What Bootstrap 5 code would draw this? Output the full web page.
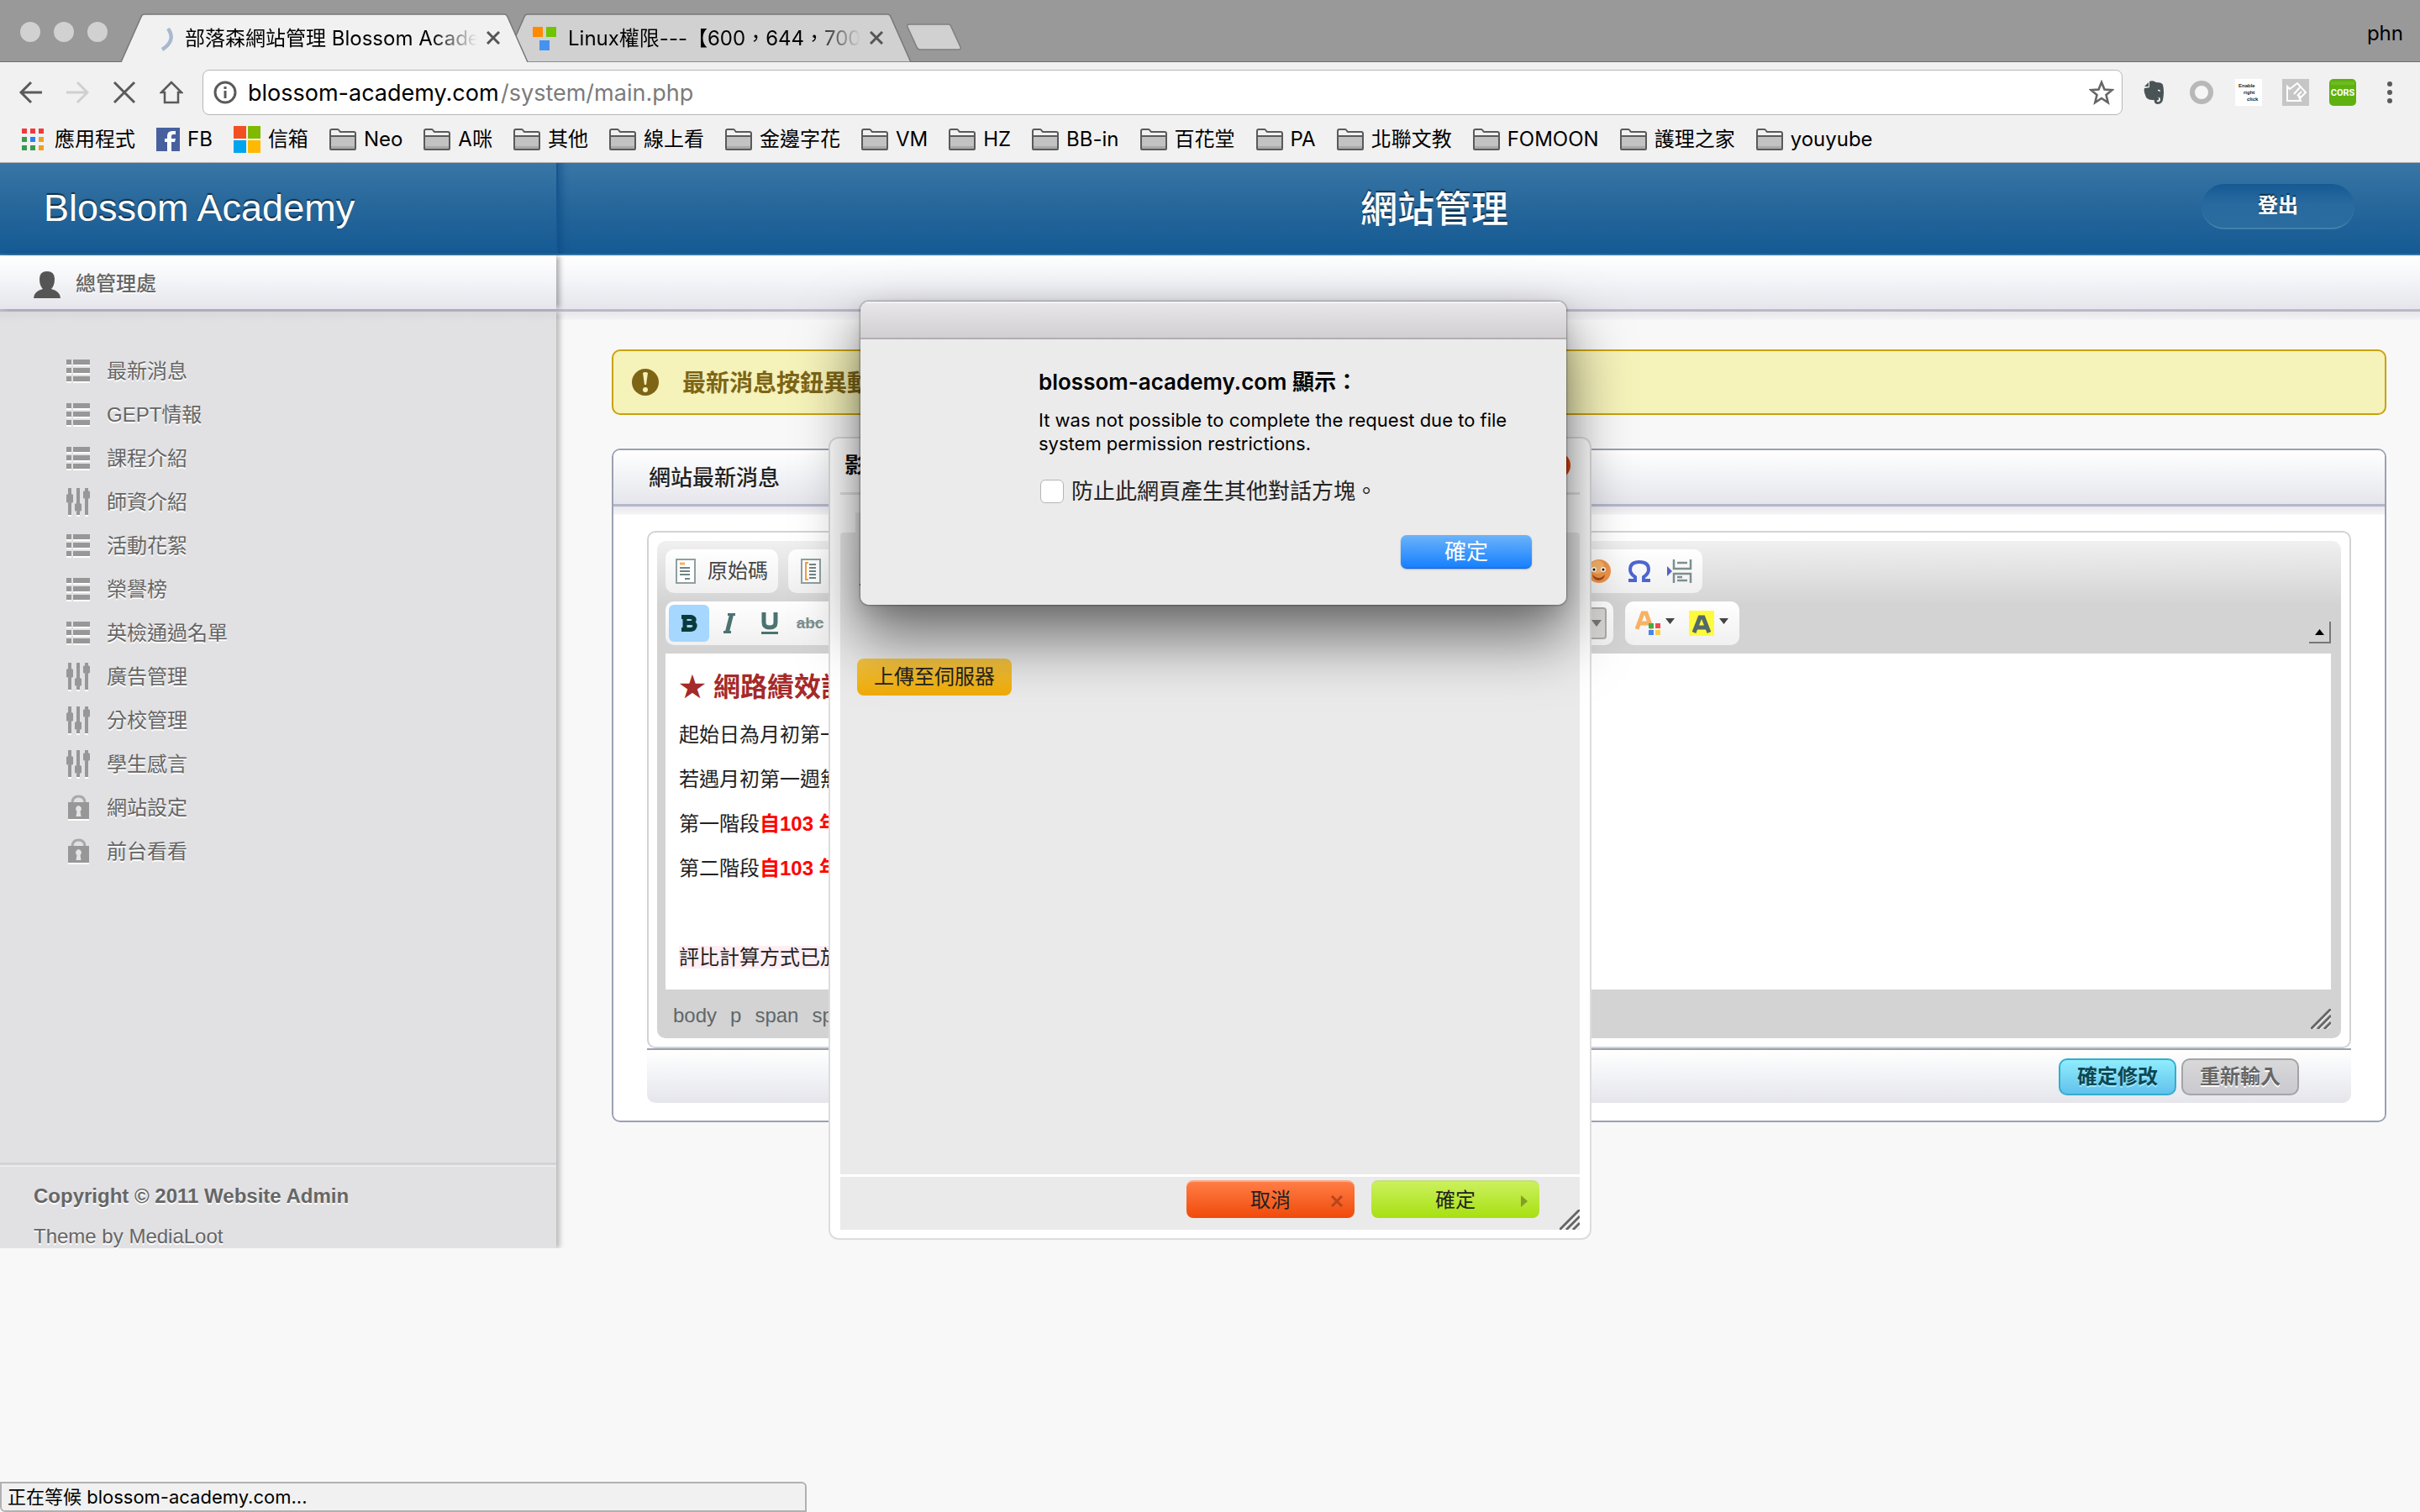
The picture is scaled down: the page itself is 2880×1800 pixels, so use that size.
<!DOCTYPE html>
<html lang="zh-Hant">
<head>
<meta charset="utf-8">
<meta name="viewport" content="width=device-width, initial-scale=1">
<title>部落森網站管理 Blossom Academy</title>
<link href="https://cdn.jsdelivr.net/npm/bootstrap@5.3.0/dist/css/bootstrap.min.css" rel="stylesheet">
<style>
:root{--ui:Inter,"Noto Sans CJK TC",sans-serif;--web:"Liberation Sans","Noto Sans CJK TC",sans-serif}
body{font:24px/32px var(--web);color:#222;background:#f8f8f8;overflow:hidden}
svg{display:block;flex:none}
a{color:inherit;text-decoration:none}
button{font-family:inherit}
.plain-btn{border:0;background:none;padding:0}
/* browser chrome */
.chrome{font-family:var(--ui);color:#000;background:#f1f1f1;border-bottom:1px solid #b4b4b4}
.strip{height:74px;background:#999;border-bottom:1px solid #6f6f6f;padding:16px 20px 0 24px}
.lights{gap:16px;height:44px;width:120px}
.lights i{width:24px;height:24px;border-radius:50%;background:#d1d1d1}
.tabx{width:484px;height:58px;padding:0 33px 0 76px;position:relative}
.tabx+.tabx{margin-left:-28px}
.tabx.front{z-index:2}
.tabx .shape{position:absolute;inset:0;width:100%;height:58px}
.tabx .fav{position:absolute;left:32px;top:14px}
.tabx .ttl{position:relative;overflow:hidden;white-space:nowrap;width:348px;line-height:58px;padding-top:2px;-webkit-mask-image:linear-gradient(90deg,#000 84%,transparent)}
.tabx button{position:relative;margin-left:auto}
.newtab{margin-left:-5px}
.tools{height:72px;padding:0 20px 0 22px}
.nav-ic{gap:28px;width:219px}
.omni{height:54px;background:#fff;border:1px solid #b6b6b6;border-radius:8px;padding:0 9px 0 12px;font-size:28px}
.omni input{border:0;padding:0;background:none;width:306px;color:#000;outline:0;line-height:40px;margin:2px -7px 0 13px}
.omni input,.omni span{font-size:27px}
.omni span{color:#7b7b7b;padding-top:2px;margin-left:2px}
.exts{gap:24px;padding-left:22px}
.marks{height:47px;padding:0 25px 8px;white-space:nowrap}
.marks a{display:flex;align-items:center;gap:9px;margin-right:25px}
/* site header */
.site-top{height:110px;background:linear-gradient(#3976a6,#29699c 40%,#155a94);border-bottom:2px solid #3775a5;color:#fff;text-shadow:0 -2px 1px rgba(0,0,0,.55)}
.side-w{width:662px;flex:none}
.brand{font-size:45px;line-height:54px;padding-left:52px;margin:0;font-weight:400}
.site-top .rest{border-left:2px solid #155790;box-shadow:inset 14px 0 10px -10px rgba(10,70,130,.6);padding-right:78px;position:relative}
.site-top h2{font-size:44px;line-height:54px;margin:0;font-weight:500;flex:1;text-align:center;padding:3px 0 0 130px}
.logout{width:182px;height:54px;border:0;border-radius:27px;border-bottom:2px solid #4480ae;background:linear-gradient(#165a94,#286a9f 45%,#2b6c9f);color:#fff;font-weight:700;font-size:24px;text-shadow:0 -2px 1px rgba(0,0,0,.5);margin-bottom:5px}
.userbar{height:67px;background:linear-gradient(#fff,#f4f5f8 45%,#e5e5eb);border-bottom:3px solid #b8bacb;color:#666;font-weight:500}
.userbar .side-w{padding:3px 0 0 38px;gap:16px;box-shadow:5px 0 6px -1px rgba(0,0,0,.3);text-shadow:0 2px 0 #fff}
/* sidebar */
.sidebar{min-height:1115px;background:linear-gradient(#d9d9dc,#e1e1e3 12px);box-shadow:4px 0 6px rgba(0,0,0,.25);color:#666;text-shadow:0 2px 0 #fff;position:relative;z-index:1;clip-path:inset(0 -20px 0 0)}
.sidebar ul{padding:45px 0 0 78px}
.sidebar li a{display:flex;align-items:center;gap:17px;height:52px}
.foot{border-top:3px solid #d3d3d3;box-shadow:inset 0 2px 0 #ebebed;padding:21px 40px 0;height:102px}
.foot p{margin:0 0 16px}
/* main */
main{padding:45px 40px 0 66px;min-width:0;background:linear-gradient(#e8e8ec,#f2f2f4 9px,#f8f8f8 10px)}
.note{height:78px;border:2px solid #c9a20c;border-radius:10px;background:#f5f2ba;color:#7d6515;font-size:28px;font-weight:700;padding:0 22px;gap:28px}
.note span{padding-top:3px}
.panel{margin-top:40px;border:2px solid #9ba1b2;border-radius:10px;background:#fff;overflow:hidden;min-height:802px}
.panel-h{height:67px;padding-left:42px;font-size:26px;font-weight:500;line-height:67px;background:linear-gradient(#fff,#f3f4f7 45%,#e5e5eb);border-bottom:3px solid #b4b7c8;text-shadow:0 2px 0 #fff;margin:0;color:#222}
.panel-b{padding:29px 40px 20px;background:linear-gradient(#e8e8ee,#f4f4f7 9px,#fff 10px)}
.ed{border:2px solid #d3d3d3;border-radius:10px;padding:10px;background:#fff}
.ed-in{border-radius:10px;background:linear-gradient(#f0f0f0,#d3d3d3 76px);padding:10px 12px 0 10px}
.grp{height:52px;border-radius:10px;background:linear-gradient(#fff,#f0f0f0)}
.grp button{height:44px;display:flex;align-items:center;justify-content:center;color:#454545}
.doc{height:400px;background:#fff;padding:20px 16px;margin-top:10px;overflow:hidden;white-space:nowrap}
.doc h3{font-size:32px;line-height:40px;font-weight:700;color:#a52a2a;margin:0 0 21px}
.doc p{margin:0 0 21px}
.doc b{color:#f00}
.path{height:58px;padding:4px 0 0 9px;gap:16px;color:#60676a}
.act{height:65px;border-top:2px solid #9ba1b2;border-radius:0 0 10px 10px;background:linear-gradient(#fff,#f3f4f7 45%,#e5e5eb);padding:10px 62px 0 0;gap:6px}
.act button{width:140px;height:44px;border-radius:10px;font-weight:700;font-size:24px;padding:0;line-height:40px}
.go{border:2px solid #31aecd;background:linear-gradient(#8fedfd,#62c1ec);color:#0c4854;text-shadow:0 2px 0 #9eeaff}
.reset{border:2px solid #a4a4a6;background:linear-gradient(#d9d9da,#c9c9cf);color:#666;text-shadow:0 2px 0 #fff}
/* upload dialog over the page */
.dlg{position:absolute;top:520px;left:50%;margin-left:-454px;width:908px;border:2px solid #ddd;border-radius:12px;background:#fff;padding:0 12px 10px;z-index:5}
.dlg-h{height:67px;border-bottom:3px solid #e4e4e4;font-size:26px;font-weight:700;color:#111;padding:0 11px 0 5px;margin-bottom:45px}
.dlg-b{height:767px;background:#eaeaea;border-radius:4px 4px 0 0;border-bottom:3px solid #fff;padding:38px 20px 0;color:#111;position:relative}
.dlg-b:before{content:"";position:absolute;left:18px;top:-24px;width:400px;height:60px;background:linear-gradient(#efefef,#eaeaea)}
.dlg-b label{position:relative;display:block;margin:0 0 80px 2px}
.dlg-b button{display:block;width:184px;height:44px;border:0;border-radius:8px;background:linear-gradient(#f5c545,#f0ac05);color:#222;padding:0}
.dlg-f{height:63px;background:#eaeaea;gap:20px;padding:4px 48px 0 0;position:relative}
.dlg-f button{width:200px;height:45px;border:0;border-radius:8px;color:#222;position:relative;padding:0}
.dlg-f button svg{position:absolute;right:14px;top:16px}
.dlg-f .yes svg{right:9px}
.no{background:linear-gradient(#ff7d45,#f04a0a);border-top:2px solid #f6ad90!important}
.yes{background:linear-gradient(#cbf05c,#a7e011);border-top:2px solid #c2e27d!important}
.grip{position:absolute;right:0;bottom:0}
/* javascript alert over everything */
.js-shadow,.jsbox{position:absolute;top:359px;left:50%;margin-left:-416px;width:840px;height:361px;border-radius:10px}
.jsbox{z-index:7;background:#ebebeb;font-family:var(--ui);color:#000;overflow:hidden}
.js-shadow{z-index:6;box-shadow:0 0 2px 1px rgba(0,0,0,.32),0 38px 70px 4px rgba(0,0,0,.5),0 8px 24px rgba(0,0,0,.12)}
.js-h{height:45px;border-top:2px solid #f4f2f4;border-bottom:2px solid #b1afb1;background:linear-gradient(#e8e6e9,#d1cfd2)}
.js-b{padding:33px 41px 0 212px}
.js-b h4{font-size:26px;line-height:36px;margin:0 0 13px;font-weight:600}
.js-b p{font-size:22px;line-height:28px;margin:0 0 26px}
.js-b .ck{display:flex;align-items:center;gap:9px;font-size:26px;line-height:34px;padding-left:2px;color:#222}
.js-b .ck input{width:28px;height:28px;margin:0;border:1px solid #b5b5b5;border-radius:6px;background:#fff}
.js-b button{display:block;margin:35px 0 0 auto;width:156px;height:40px;border:0;border-radius:7px;background:linear-gradient(#6cb3fa,#1580fe);border-bottom:1px solid #0c62e8;color:#fff;font-size:26px;line-height:39px;padding:0;box-shadow:0 1px 2px rgba(0,0,0,.25)}
.status{position:absolute;left:0;bottom:0;width:960px;height:36px;border:2px solid #b1b1b1;border-radius:0 6px 0 6px;background:#f1f1f1;font:22px/32px var(--ui);padding-left:7px;color:#000}
</style>
</head>
<body class="min-vh-100 position-relative">
<svg width="0" height="0" class="position-absolute">
<symbol id="folder" viewBox="0 0 32 26"><path d="M1 24V3q0-2 2-2h7q1 0 2 2l1 1h16q2 0 2 2v18q0 1-1 1H2q-1 0-1-1z" fill="#f1f1f1" stroke="#5a5a5a" stroke-width="2"/><path d="M2 9h28v15H2z" fill="#c2c2c2"/><path d="M2 21h28v3H2z" fill="#a9a9a9"/><path d="M1 9h30" stroke="#5a5a5a" stroke-width="2"/></symbol>
<symbol id="list" viewBox="0 0 32 32"><path d="M1 5h6v5H1zM9 5h20v5H9zM1 15h6v5H1zM9 15h20v5H9zM1 25h6v5H1zM9 25h20v5H9z" fill="#fff"/><path d="M1 2h6v6H1zM9 2h20v6H9zM1 12h6v6H1zM9 12h20v6H9zM1 22h6v6H1zM9 22h20v6H9z" fill="#979797"/></symbol>
<symbol id="sliders" viewBox="0 0 32 36"><path d="M3 3h4v32H3zM13 3h4v32h-4zM23 3h4v32h-4z" fill="#fff"/><path d="M3 1h4v32H3zM13 1h4v32h-4zM23 1h4v32h-4zM1 9q4-3 8 0v9q-4 2-8 0zM11 20q4-3 8 0v8q-4 2-8 0zM21 5q4-2 8 0v8q-4 2-8 0z" fill="#979797"/></symbol>
<symbol id="lock" viewBox="0 0 32 32"><path d="M3 11h25v20H3z" fill="#fff"/><path d="M8 10q0-8 7.500-8t7.500 8" fill="none" stroke="#a9a9a9" stroke-width="3"/><path d="M3 9h25v20H3z" fill="#979797"/><path d="M15.500 13a4 4 0 0 1 2 7l1 6h-6l1-6a4 4 0 0 1 2-7z" fill="#e4e4e6"/></symbol>
<symbol id="gripper" viewBox="0 0 24 24"><path d="M1 24L24 1M9 24L24 9M17 24l7-7" stroke="#fff" stroke-width="4" opacity=".7"/><path d="M0 24L24 0M8 24L24 8M16 24l8-8" stroke="#666" stroke-width="3"/></symbol>
<symbol id="shut" viewBox="0 0 16 16"><path d="M1 1l14 14M15 1L1 15" stroke="#555" stroke-width="3"/></symbol>
</svg>

<header class="chrome">
 <div class="strip d-flex">
  <div class="lights d-flex align-items-center"><i></i><i></i><i></i></div>
  <div class="tabx front d-flex align-items-center">
   <svg class="shape" viewBox="0 0 484 58"><path d="M0 58L24 4q1-3 4-3H456q3 0 4 3L484 58" fill="#f1f1f1" stroke="#777" stroke-width="1.500"/></svg>
   <svg class="fav" width="32" height="32" viewBox="0 0 32 32"><path d="M24 4Q34 18 17 29" fill="none" stroke="#a9b8cf" stroke-width="4.500"/></svg>
   <span class="ttl">部落森網站管理 Blossom Academy</span>
   <button class="plain-btn" aria-label="關閉"><svg width="16" height="16"><use href="#shut"/></svg></button>
  </div>
  <div class="tabx d-flex align-items-center">
   <svg class="shape" viewBox="0 0 484 58"><path d="M0 58L24 4q1-3 4-3H456q3 0 4 3L484 58z" fill="#d1d1d1" stroke="#777" stroke-width="1.500"/></svg>
   <svg class="fav" width="32" height="32" viewBox="0 0 32 32"><path d="M2 2h12v12H2z" fill="#ff8a00"/><path d="M18 2h12v12H18z" fill="#70c400"/><path d="M10 18h12v12H10z" fill="#4593f0"/></svg>
   <span class="ttl">Linux權限---【600，644，700】</span>
   <button class="plain-btn" aria-label="關閉"><svg width="16" height="16"><use href="#shut"/></svg></button>
  </div>
  <button class="plain-btn newtab align-self-center" aria-label="新分頁"><svg width="66" height="34" viewBox="0 0 66 34"><path d="M1 4q-1-3 2-3h47q2 0 3 3l11 24q1 3-2 3H16q-3 0-4-3z" fill="#d1d1d1" stroke="#7f7f7f" stroke-width="1.500"/></svg></button>
  <span class="ms-auto mt-2">phn</span>
 </div>
 <div class="tools d-flex align-items-center">
  <div class="nav-ic d-flex align-items-center">
   <button class="plain-btn" aria-label="上一頁"><svg width="28" height="28" viewBox="0 0 28 28" fill="none" stroke="#5a5a5a" stroke-width="3"><path d="M28 14H4M15 2L3 14l12 12"/></svg></button>
   <button class="plain-btn" aria-label="下一頁"><svg width="28" height="28" viewBox="0 0 28 28" fill="none" stroke="#d0d0d0" stroke-width="3"><path d="M1 14h24M14 2l12 12-12 12"/></svg></button>
   <button class="plain-btn" aria-label="停止"><svg width="28" height="28" viewBox="0 0 28 28" stroke="#5a5a5a" stroke-width="3"><path d="M2 2l24 24M26 2L2 26"/></svg></button>
   <button class="plain-btn" aria-label="首頁"><svg width="28" height="28" viewBox="0 0 28 28" fill="none" stroke="#5a5a5a" stroke-width="2.500"><path d="M14 2L2 14h4v12h16V14h4z"/></svg></button>
  </div>
  <div class="omni d-flex align-items-center flex-grow-1">
   <svg width="28" height="28" viewBox="0 0 28 28" fill="none" stroke="#5a5a5a" stroke-width="3"><circle cx="14" cy="14" r="12"/><path d="M14 12v9M14 7v3"/></svg>
   <input type="text" value="blossom-academy.com" aria-label="網址"><span>/system/main.php</span>
   <button class="plain-btn ms-auto" aria-label="加入書籤"><svg width="30" height="30" viewBox="0 0 30 30"><path d="M15 3l3.500 8.500 9 .7-7 5.800 2.200 9L15 22l-7.700 5 2.200-9-7-5.800 9-.7z" fill="none" stroke="#666" stroke-width="2.600"/></svg></button>
  </div>
  <div class="exts d-flex align-items-center">
   <svg width="32" height="32" viewBox="0 0 32 32"><path d="M4 11l6-1V3q4-2 8 1 7 0 8 3 2 8 0 18-1 5-7 5-4-1-3-5 1-3 5-3v3q-3 0-2 2 4 1 4-3-1-4-5-1-1 3-4 2-8 0-9-6-2-5-1-8zM4 9l5-5v5z" fill="#4a5456"/><path d="M20 13q3-1 3 2l-3-1z" fill="#fff"/></svg>
   <svg width="32" height="32" viewBox="0 0 32 32"><circle cx="16" cy="16" r="11" fill="#f6f6f6" stroke="#b8b8b8" stroke-width="6"/></svg>
   <svg width="32" height="32" viewBox="0 0 32 32" font-family="Liberation Sans" font-size="6" font-weight="700" fill="#222"><path d="M0 0h32v32H0z" fill="#fff"/><text x="4" y="10">Enable</text><text x="10" y="18">right</text><text x="14" y="26">click</text></svg>
   <svg width="32" height="32" viewBox="0 0 32 32"><path d="M0 0h32v32H0z" fill="#c6c6c6"/><path d="M6 9l3 3 9-7 10 11-6 6-3-3 3 7H6zM14 18l7-8M18 20l5-5" fill="none" stroke="#fff" stroke-width="2"/></svg>
   <svg width="32" height="32" viewBox="0 0 32 32"><rect width="32" height="32" rx="5" fill="#5eb10f"/><path d="M2 3h28v4H2z" fill="#7cc53a" opacity=".5"/><text x="16" y="20" text-anchor="middle" font-family="Roboto,sans-serif" font-size="11" font-weight="700" fill="#fff">CORS</text></svg>
   <button class="plain-btn" aria-label="選單"><svg width="32" height="32" viewBox="0 0 32 32" fill="#5a5a5a"><circle cx="16" cy="6" r="3"/><circle cx="16" cy="16" r="3"/><circle cx="16" cy="26" r="3"/></svg></button>
  </div>
 </div>
 <nav class="marks d-flex align-items-center" aria-label="書籤">
  <a href="#" style="gap:12px"><svg width="28" height="28" viewBox="0 0 28 28"><path d="M1 1h6v6H1zM11 1h6v6h-6zM21 1h6v6h-6z" fill="#f03a3a"/><path d="M1 11h6v6H1zM1 21h6v6H1zM11 21h6v6h-6z" fill="#3c9a50"/><path d="M11 11h6v6h-6z" fill="#2f80ed"/><path d="M21 11h6v6h-6zM21 21h6v6h-6z" fill="#f0a020"/></svg>應用程式</a>
  <a href="#"><svg width="28" height="28" viewBox="0 0 28 28"><path d="M0 0h28v28H0z" fill="#46619d"/><path d="M18 28V17h4l1-4h-5v-3q0-2 2-2h3V4h-4q-6 0-6 6v3h-3v4h3v11z" fill="#fff"/></svg>FB</a>
  <a href="#"><svg width="32" height="32" viewBox="0 0 32 32"><path d="M0 0h15v15H0z" fill="#f25022"/><path d="M17 0h15v15H17z" fill="#7fba00"/><path d="M0 17h15v15H0z" fill="#00a4ef"/><path d="M17 17h15v15H17z" fill="#ffb900"/></svg>信箱</a>
  <a href="#"><svg width="32" height="26"><use href="#folder"/></svg>Neo</a>
  <a href="#"><svg width="32" height="26"><use href="#folder"/></svg>A咪</a>
  <a href="#"><svg width="32" height="26"><use href="#folder"/></svg>其他</a>
  <a href="#"><svg width="32" height="26"><use href="#folder"/></svg>線上看</a>
  <a href="#"><svg width="32" height="26"><use href="#folder"/></svg>金邊字花</a>
  <a href="#"><svg width="32" height="26"><use href="#folder"/></svg>VM</a>
  <a href="#"><svg width="32" height="26"><use href="#folder"/></svg>HZ</a>
  <a href="#"><svg width="32" height="26"><use href="#folder"/></svg>BB-in</a>
  <a href="#"><svg width="32" height="26"><use href="#folder"/></svg>百花堂</a>
  <a href="#"><svg width="32" height="26"><use href="#folder"/></svg>PA</a>
  <a href="#"><svg width="32" height="26"><use href="#folder"/></svg>北聯文教</a>
  <a href="#"><svg width="32" height="26"><use href="#folder"/></svg>FOMOON</a>
  <a href="#"><svg width="32" height="26"><use href="#folder"/></svg>護理之家</a>
  <a href="#"><svg width="32" height="26"><use href="#folder"/></svg>youyube</a>
 </nav>
</header>

<div class="site-top d-flex">
 <div class="side-w d-flex align-items-center"><h1 class="brand"><a href="#">Blossom Academy</a></h1></div>
 <div class="rest flex-grow-1 d-flex align-items-center"><h2>網站管理</h2><button class="logout">登出</button></div>
</div>
<div class="userbar d-flex">
 <div class="side-w d-flex align-items-center"><svg width="36" height="34" viewBox="0 0 36 34"><path d="M2 34q0-8 11-11-4-4-4-12 0-9 9-9t9 9q0 8-4 12 11 3 11 11z" fill="#555"/></svg>總管理處</div>
</div>

<div class="d-flex align-items-start">
 <aside class="sidebar side-w d-flex flex-column">
  <ul class="list-unstyled m-0">
   <li><a href="#"><svg width="32" height="32"><use href="#list"/></svg>最新消息</a></li>
   <li><a href="#"><svg width="32" height="32"><use href="#list"/></svg>GEPT情報</a></li>
   <li><a href="#"><svg width="32" height="32"><use href="#list"/></svg>課程介紹</a></li>
   <li><a href="#"><svg width="32" height="36"><use href="#sliders"/></svg>師資介紹</a></li>
   <li><a href="#"><svg width="32" height="32"><use href="#list"/></svg>活動花絮</a></li>
   <li><a href="#"><svg width="32" height="32"><use href="#list"/></svg>榮譽榜</a></li>
   <li><a href="#"><svg width="32" height="32"><use href="#list"/></svg>英檢通過名單</a></li>
   <li><a href="#"><svg width="32" height="36"><use href="#sliders"/></svg>廣告管理</a></li>
   <li><a href="#"><svg width="32" height="36"><use href="#sliders"/></svg>分校管理</a></li>
   <li><a href="#"><svg width="32" height="36"><use href="#sliders"/></svg>學生感言</a></li>
   <li><a href="#"><svg width="32" height="32"><use href="#lock"/></svg>網站設定</a></li>
   <li><a href="#"><svg width="32" height="32"><use href="#lock"/></svg>前台看看</a></li>
  </ul>
  <footer class="foot mt-auto"><p class="fw-bold">Copyright © 2011 Website Admin</p><p>Theme by <a href="#">MediaLoot</a></p></footer>
 </aside>
 <main class="flex-grow-1">
  <div class="note d-flex align-items-center"><svg width="32" height="32" viewBox="0 0 32 32"><circle cx="16" cy="16" r="16" fill="#7d6515"/><path d="M13 5q3-2 6 0l-2 14h-2z" fill="#f5f2ba"/><circle cx="16" cy="25" r="3" fill="#f5f2ba"/></svg><span>最新消息按鈕異動</span></div>
  <section class="panel">
   <h3 class="panel-h">網站最新消息</h3>
   <div class="panel-b">
    <div class="ed"><div class="ed-in">
     <div class="d-flex" style="gap:12px">
      <div class="grp d-flex align-items-center" style="width:134px"><button class="plain-btn w-100" style="gap:14px"><svg width="24" height="30" viewBox="0 0 24 30"><path d="M1 1h22v28H1z" fill="#fff" stroke="#8fa0a0" stroke-width="2"/><path d="M5 6h6" stroke="#f5b060" stroke-width="3"/><path d="M5 11h12M5 15h12M5 19h12M11 24h6" stroke="#6f8585" stroke-width="2"/></svg>原始碼</button></div>
      <div class="grp d-flex align-items-center" style="width:1088px;padding:0 12px 0 15px;gap:18px">
       <button class="plain-btn me-auto" aria-label="儲存"><svg width="24" height="30" viewBox="0 0 24 30"><path d="M1 1h22v28H1z" fill="#fff" stroke="#8fa0a0" stroke-width="2"/><path d="M9 5H6v20h3" fill="none" stroke="#f5a040" stroke-width="2"/><path d="M10 7h8M10 11h8M10 15h8M10 19h8M10 23h8" stroke="#6f8585" stroke-width="2"/></svg></button>
       <button class="plain-btn" aria-label="表情符號"><svg width="30" height="30" viewBox="0 0 30 30"><circle cx="15" cy="15" r="14" fill="#f0944a"/><circle cx="13" cy="10" r="8" fill="#f7b36a"/><circle cx="9" cy="13" r="3" fill="#fff"/><circle cx="20" cy="13" r="3" fill="#fff"/><circle cx="9" cy="13" r="1.500"/><circle cx="20" cy="13" r="1.500"/><path d="M7 19q8 8 15 0-1 7-8 7-6-1-7-7z" fill="#a04a1a"/></svg></button>
       <button class="plain-btn" aria-label="特殊符號"><svg width="30" height="28" viewBox="0 0 30 28" fill="none" stroke="#4f66cf" stroke-width="4"><path d="M2 25h8v-4q-6-4-6-9 0-9 11-9t11 9q0 5-6 9v4h8"/></svg></button>
       <button class="plain-btn" aria-label="分頁符號"><svg width="30" height="30" viewBox="0 0 30 30" fill="none" stroke="#7c8f8f" stroke-width="2.500"><path d="M8 1v11h20V1M12 5h12M8 29V18h20v11M12 22h6M12 26h12"/><path d="M0 9l6 6-6 6z" fill="#5560c8" stroke="none"/></svg></button>
      </div>
     </div>
     <div class="d-flex align-items-start" style="gap:14px;margin-top:10px">
      <div class="grp d-flex align-items-center" style="width:1128px;padding:0 8px 0 4px">
       <button class="plain-btn rounded-2" style="width:48px;background:#a5d7ff" aria-label="粗體"><svg width="20" height="20" viewBox="0 0 20 20" fill="none" stroke="#0a3a3e" stroke-width="5"><path d="M1 2.500h11q5 1 4 4-1 3-4 3H6h7q5 1 4 4-1 4-5 4H1M5 2v16"/></svg></button>
       <button class="plain-btn" style="width:48px" aria-label="斜體"><svg width="18" height="26" viewBox="0 0 18 26" stroke="#4b7371" fill="none" stroke-width="3"><path d="M7 2.500h9M2 23.500h9"/><path d="M11.500 3l-5 20" stroke-width="5"/></svg></button>
       <button class="plain-btn" style="width:48px" aria-label="底線"><svg width="22" height="26" viewBox="0 0 22 26" stroke="#4b7371" fill="none"><path d="M4 0v12q0 6 7 6t7-6V0" stroke-width="5"/><path d="M1 24.500h20" stroke-width="3"/></svg></button>
       <button class="plain-btn" style="width:48px;font-size:19px;line-height:24px"><s class="fw-bold" style="color:#7c8f8f">abc</s></button>
       <button class="plain-btn ms-auto" style="width:24px;height:38px;border:2px solid #aaa;border-radius:4px;background:#d8d4d4" aria-label="大小"><svg width="12" height="8"><path d="M0 0h12L6 8z" fill="#777"/></svg></button>
      </div>
      <div class="grp d-flex align-items-center" style="width:136px;padding:0 12px;gap:16px">
       <button class="plain-btn" style="gap:6px" aria-label="文字顏色"><svg width="30" height="30" viewBox="0 0 30 30"><path d="M2 22L9 3h4l7 19M5 15h11" fill="none" stroke="#f7b265" stroke-width="5"/><path d="M16 15h6v6h-6z" fill="#3fae49"/><path d="M24 15h6v6h-6z" fill="#f04a50"/><path d="M16 23h6v6h-6z" fill="#4388f0"/><path d="M24 23h6v6h-6z" fill="#f7d04a"/></svg><svg width="12" height="14"><path d="M0 1h11L5.500 8z" fill="#444"/></svg></button>
       <button class="plain-btn" style="gap:6px" aria-label="背景顏色"><svg width="30" height="30" viewBox="0 0 30 30"><path d="M0 0h30v30H0z" fill="#fffb3c"/><path d="M6 26l7-18h4l7 18M9 20h12" fill="none" stroke="#55696a" stroke-width="5"/></svg><svg width="12" height="14"><path d="M0 1h11L5.500 8z" fill="#444"/></svg></button>
      </div>
      <button class="plain-btn ms-auto mt-4" aria-label="收合"><svg width="26" height="26" viewBox="0 0 26 26"><path d="M25 0v25H0" fill="none" stroke="#777" stroke-width="2"/><path d="M7 16h11l-5.500-7z"/></svg></button>
     </div>
     <article class="doc">
      <h3>★ 網路績效評比</h3>
      <p>起始日為月初第一週</p><p>若遇月初第一週無法</p><p>第一階段<b>自103 年起</b></p><p>第二階段<b>自103 年起</b></p><p>&nbsp;</p><p><span style="background:#ffeef3">評比計算方式已放置</span></p>
     </article>
     <div class="path d-flex align-items-center"><span>body</span><span>p</span><span>span</span><span>span</span><svg class="ms-auto mt-2" width="24" height="24"><use href="#gripper"/></svg></div>
    </div></div>
    <div class="act d-flex align-items-start justify-content-end"><button class="go">確定修改</button><button class="reset">重新輸入</button></div>
   </div>
  </section>
 </main>
</div>

<section class="dlg" role="dialog" aria-label="影像屬性">
 <div class="dlg-h d-flex align-items-center justify-content-between"><span>影像屬性</span><button class="plain-btn" aria-label="關閉"><svg width="32" height="32" viewBox="0 0 32 32"><circle cx="16" cy="16" r="16" fill="#e8430c"/><path d="M10 10l12 12M22 10L10 22" stroke="#fff" stroke-width="3"/></svg></button></div>
 <div class="dlg-b"><label for="up">上傳</label><button id="up">上傳至伺服器</button></div>
 <div class="dlg-f d-flex justify-content-end">
  <button class="no">取消<svg width="14" height="14"><path d="M1 1l12 12M13 1L1 13" stroke="#b8441c" stroke-width="3"/></svg></button>
  <button class="yes">確定<svg width="14" height="14"><path d="M1 0v14l8-7z" fill="#849c2c"/></svg></button>
  <svg class="grip" width="24" height="24"><use href="#gripper"/></svg>
 </div>
</section>
<div class="js-shadow"></div>
<section class="jsbox" role="alertdialog" aria-label="blossom-academy.com">
 <div class="js-h"></div>
 <div class="js-b">
  <h4>blossom-academy.com 顯示：</h4>
  <p>It was not possible to complete the request due to file system permission restrictions.</p>
  <label class="ck"><input type="checkbox" class="form-check-input">防止此網頁產生其他對話方塊。</label>
  <button>確定</button>
 </div>
</section>
<div class="status">正在等候 blossom-academy.com...</div>
<script src="https://cdn.jsdelivr.net/npm/bootstrap@5.3.0/dist/js/bootstrap.bundle.min.js"></script>
</body>
</html>
